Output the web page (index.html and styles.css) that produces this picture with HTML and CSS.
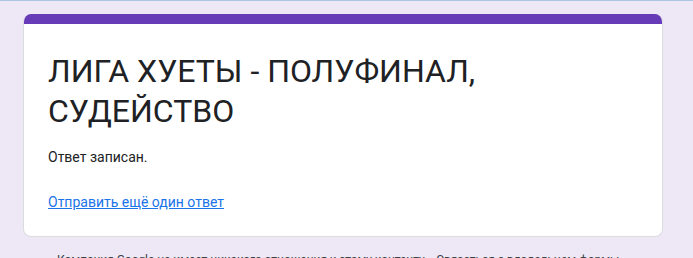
FILE: index.html
```html
<!DOCTYPE html>
<html lang="ru">
<head>
    <meta charset="UTF-8">
    <meta name="viewport" content="width=device-width, initial-scale=1.0">
    <title>ЛИГА ХУЕТЫ - ПОЛУФИНАЛ, СУДЕЙСТВО</title>
    <link rel="stylesheet" href="styles.css">
</head>
<body>
    <div class="page">
        <div class="card">
            <div class="card-top"></div>
            <div class="card-body">
                <h1 class="title">ЛИГА ХУЕТЫ - ПОЛУФИНАЛ, СУДЕЙСТВО</h1>
                <p class="message">Ответ записан.</p>
                <a class="again" href="#">Отправить ещё один ответ</a>
            </div>
        </div>
        <p class="footer">Компания Google не имеет никакого отношения к этому контенту. - Связаться с владельцем формы -</p>
    </div>
</body>
</html>
```

FILE: styles.css
```css
body {
    margin: 0;
    background-color: #ede7f6;
    border-top: 1px solid #a9c6e3;
    font-family: Roboto, "Liberation Sans", Arial, sans-serif;
    color: #202124;
    overflow: hidden;
}
.page {
    padding: 13px 0 0 23px;
    width: 640px;
}
.card {
    background-color: #fff;
    border: 1px solid #dadce0;
    border-top: none;
    border-radius: 8px;
    overflow: hidden;
}
.card-top {
    height: 10px;
    background-color: #673ab7;
}
.card-body {
    padding: 27px 24px 24px 24px;
}
.title {
    margin: 0 0 16px;
    font-size: 32px;
    font-weight: 400;
    line-height: 40px;
    color: #202124;
}
.message {
    margin: 0 0 25px;
    font-size: 14px;
    line-height: 20px;
}
.again {
    display: block;
    font-size: 14px;
    line-height: 20px;
    color: #1a73e8;
    text-decoration: underline;
}
.footer {
    margin: 15px 0 0 34px;
    font-size: 12px;
    line-height: 16px;
    letter-spacing: -0.05px;
    color: #3c4043;
    white-space: nowrap;
}
```
